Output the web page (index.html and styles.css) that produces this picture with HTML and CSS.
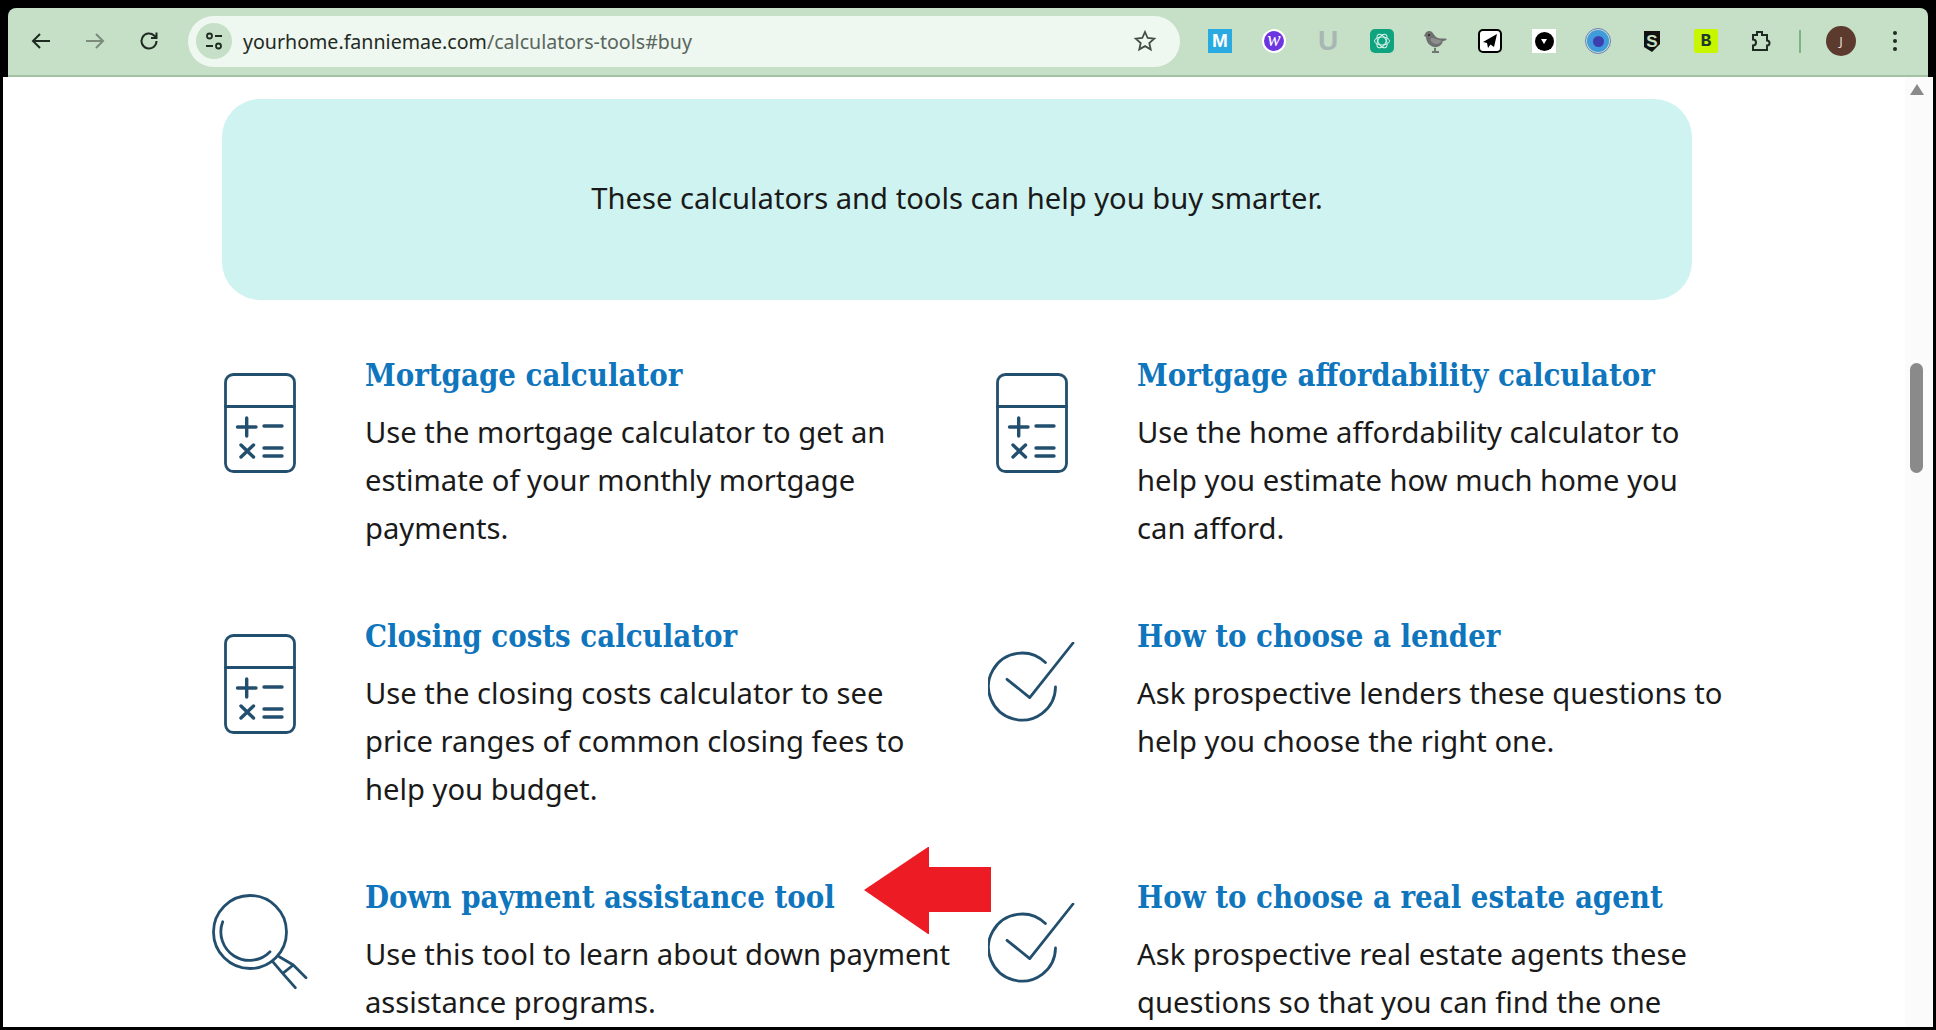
FILE: index.html
```html
<!DOCTYPE html>
<html>
<head>
  <title>Calculators and tools</title>
  <link rel="stylesheet" href="styles.css">
</head>
<body>
<div class="frame">

  <!-- browser toolbar -->
  <div class="toolbar">
    <div class="nav-btn">
      <svg width="24" height="24" viewBox="0 0 24 24" class="stroke-dark"><path d="M21 12H4M11 5l-7 7 7 7"/></svg>
    </div>
    <div class="nav-btn">
      <svg width="24" height="24" viewBox="0 0 24 24" class="stroke-grey"><path d="M3 12h17M13 5l7 7-7 7"/></svg>
    </div>
    <div class="nav-btn">
      <svg width="24" height="24" viewBox="0 0 24 24" class="stroke-dark"><path d="M19.500 12a7.500 7.500 0 1 1-2.400-5.500L19.500 9M19.500 3.500V9H14"/></svg>
    </div>

    <div class="address">
      <div class="site-icon">
        <svg width="22" height="22" viewBox="0 0 22 22" class="stroke-dark thin">
          <circle cx="6.500" cy="6" r="2.500"/><path d="M12 6h7M3 16h7"/><circle cx="15.500" cy="16" r="2.500"/>
        </svg>
      </div>
      <div class="url">yourhome.fanniemae.com<span class="url-path">/calculators-tools#buy</span></div>
      <svg class="star" width="24" height="24" viewBox="0 0 24 24"><path d="M12 3l2.700 6 6.500.7-4.900 4.300 1.400 6.400-5.700-3.300-5.700 3.300 1.400-6.400-4.900-4.300 6.500-.7z"/></svg>
    </div>

    <div class="extensions">
      <div class="ext"><div class="ext-m">M</div></div>
      <div class="ext"><div class="ext-w">w</div></div>
      <div class="ext"><div class="ext-u">U</div></div>
      <div class="ext">
        <div class="ext-gpt">
          <svg width="18" height="18" viewBox="0 0 18 18">
            <ellipse cx="9" cy="9" rx="7.500" ry="4"/>
            <ellipse cx="9" cy="9" rx="7.500" ry="4" transform="rotate(60 9 9)"/>
            <ellipse cx="9" cy="9" rx="7.500" ry="4" transform="rotate(120 9 9)"/>
          </svg>
        </div>
      </div>
      <div class="ext">
        <svg width="26" height="24" viewBox="0 0 26 24">
          <path fill="#6f6f6f" d="M2 5c1-3 5-4 7-2 2 2 3 5 6 6 3 1 6 0 9 1-1 1-2 2-4 2-1 4-5 7-9 6-5-1-8-6-8-10L1 7z"/>
          <path fill="#8e8e8e" d="M8 9c4 0 8 2 11 3-2 3-7 4-9 2-2-1-3-3-2-5z"/>
          <circle cx="6" cy="6" r="1" fill="#222"/>
          <path fill="none" stroke="#555" stroke-width="1.500" d="M12 19v3M9 23h7"/>
        </svg>
      </div>
      <div class="ext">
        <div class="ext-plane">
          <svg width="18" height="18" viewBox="0 0 18 18"><path d="M16 2L2 10l4 1 1 5 2.500-3.500L13 15z"/></svg>
        </div>
      </div>
      <div class="ext">
        <div class="ext-dot">
          <div class="ext-dot-inner">
            <svg width="6" height="6" viewBox="0 0 6 6"><path d="M0 1H6L3 6z"/></svg>
          </div>
        </div>
      </div>
      <div class="ext"><div class="ext-ring"><div class="ext-ring-inner"></div></div></div>
      <div class="ext">
        <div class="ext-shield">
          <svg width="16" height="21" viewBox="0 0 16 21"><path fill="#111" d="M0 0h16v13l-8 8-8-5z"/></svg>
          <span class="ext-shield-letter">S</span>
        </div>
      </div>
      <div class="ext"><div class="ext-b">B</div></div>
      <div class="ext">
        <svg width="24" height="24" viewBox="0 0 24 24" class="stroke-dark"><path d="M9 6V3h5v3h5v5.500a2.500 2.500 0 0 1 0 5V21H5v-4.500a3 3 0 0 0 0-6V6z"/></svg>
      </div>
    </div>

    <div class="toolbar-sep"></div>
    <div class="avatar">J</div>
    <div class="menu-dots"><span></span><span></span><span></span></div>
  </div>

  <div class="viewport">
    <div class="page">
      <div class="banner">These calculators and tools can help you buy smarter.</div>

      <div class="tools">
        <div class="tool">
          <div class="tool-icon icon-calc">
            <svg width="72" height="100" viewBox="0 0 72 100"><use href="#calc"/></svg>
          </div>
          <div>
            <h3>Mortgage calculator</h3>
            <p>Use the mortgage calculator to get an<br>estimate of your monthly mortgage<br>payments.</p>
          </div>
        </div>
        <div class="tool">
          <div class="tool-icon icon-calc">
            <svg width="72" height="100" viewBox="0 0 72 100"><use href="#calc"/></svg>
          </div>
          <div>
            <h3>Mortgage affordability calculator</h3>
            <p>Use the home affordability calculator to<br>help you estimate how much home you<br>can afford.</p>
          </div>
        </div>
        <div class="tool">
          <div class="tool-icon icon-calc">
            <svg width="72" height="100" viewBox="0 0 72 100"><use href="#calc"/></svg>
          </div>
          <div>
            <h3>Closing costs calculator</h3>
            <p>Use the closing costs calculator to see<br>price ranges of common closing fees to<br>help you budget.</p>
          </div>
        </div>
        <div class="tool">
          <div class="tool-icon icon-check">
            <svg width="88" height="80" viewBox="0 0 88 80"><use href="#check"/></svg>
          </div>
          <div>
            <h3>How to choose a lender</h3>
            <p>Ask prospective lenders these questions to<br>help you choose the right one.</p>
          </div>
        </div>
        <div class="tool">
          <div class="tool-icon icon-search">
            <svg width="100" height="98" viewBox="0 0 100 98"><use href="#search"/></svg>
          </div>
          <div>
            <h3>Down payment assistance tool</h3>
            <p>Use this tool to learn about down payment<br>assistance programs.</p>
          </div>
        </div>
        <div class="tool">
          <div class="tool-icon icon-check">
            <svg width="88" height="80" viewBox="0 0 88 80"><use href="#check"/></svg>
          </div>
          <div>
            <h3>How to choose a real estate agent</h3>
            <p>Ask prospective real estate agents these<br>questions so that you can find the one</p>
          </div>
        </div>
      </div>
    </div>

    <div class="scrollbar">
      <div class="scroll-up"></div>
      <div class="scroll-thumb"></div>
    </div>

    <!-- red annotation arrow -->
    <svg class="red-arrow" width="130" height="90" viewBox="0 0 130 90">
      <path d="M1 44L65 1H66V21H128V66H66V88H65z"/>
    </svg>
  </div>
</div>

<!-- shared icons -->
<svg class="icon-defs" width="0" height="0">
  <defs>
    <g id="calc" class="line-icon">
      <rect x="1.500" y="1.500" width="69" height="97" rx="8"/>
      <path d="M1.500 33.500H70.500"/>
      <path class="bold" d="M13.500 54H32M22.700 45V63M40 53H58M17 72L29.500 84M29.500 72L17 84M40 75H58M40 83H58"/>
    </g>
    <g id="check" class="line-icon">
      <path d="M57.400 20.600A33.500 33.500 0 1 0 67.500 45M19 37.300L41.700 55.600L85 1"/>
    </g>
    <g id="search" class="line-icon">
      <circle cx="40" cy="39" r="36.500"/>
      <path d="M12.700 28.700A28.600 28.600 0 0 0 60 58.700M69.300 63.700L83.300 72L96 84.700M62.700 68.700L72.700 80.300L85.300 94.700M72.700 80.300L83.300 72"/>
    </g>
  </defs>
</svg>
</body>
</html>
```

FILE: styles.css
```css
html, body {
  margin: 0;
  height: 100%;
  overflow: hidden;
}

body {
  background-color: #000;
  font-family: "Noto Sans", sans-serif;
}

.frame {
  height: 1030px;
  padding: 8px 3px 3px 3px;
  box-sizing: border-box;
  display: flex;
  flex-direction: column;
}

/* toolbar */
.toolbar {
  height: 69px;
  margin: 0 5px;
  box-sizing: border-box;
  background-color: #c5e0c6;
  border-bottom: 2px solid #a3c2a4;
  border-radius: 8px 8px 0 0;
  display: flex;
  align-items: center;
  padding: 0 0 1px 6px;
  flex: none;
}

.nav-btn {
  width: 54px;
  display: flex;
  justify-content: center;
  flex: none;
}

.toolbar svg {
  display: block;
}

.stroke-dark path, .stroke-dark circle,
.stroke-grey path {
  fill: none;
  stroke: #1f2a22;
  stroke-width: 2;
}

.stroke-dark.thin path, .stroke-dark.thin circle {
  stroke-width: 1.800;
}

.stroke-grey path {
  stroke: #7b8c7d;
}

.address {
  width: 992px;
  height: 51px;
  margin-left: 12px;
  background-color: #eff7f1;
  border-radius: 26px;
  display: flex;
  align-items: center;
  flex: none;
}

.site-icon {
  width: 36px;
  height: 36px;
  margin-left: 8px;
  border-radius: 50%;
  background-color: #c5e0c6;
  display: flex;
  align-items: center;
  justify-content: center;
  flex: none;
}

.url {
  margin-left: 11px;
  font-size: 19.600px;
  color: #1f2a22;
  flex: 1;
}

.url-path {
  color: #59665c;
}

.star {
  margin-right: 23px;
}

.star path {
  fill: none;
  stroke: #444d46;
  stroke-width: 1.800;
}

.extensions {
  display: flex;
  margin-left: 13px;
  flex: none;
}

.ext {
  width: 54px;
  height: 36px;
  display: flex;
  align-items: center;
  justify-content: center;
}

.ext-m {
  width: 24px;
  height: 24px;
  background-color: #29abe2;
  color: #fff;
  font: bold 19px/24px "Liberation Sans", sans-serif;
  text-align: center;
}

.ext-w {
  width: 24px;
  height: 24px;
  box-sizing: border-box;
  border: 2px solid #fff;
  border-radius: 50%;
  background-color: #6d35e0;
  color: #fff;
  font: italic 20px/17px "Liberation Serif", serif;
  text-align: center;
}

.ext-u {
  color: #a9b7b4;
  font: bold 28px/28px "Liberation Sans", sans-serif;
}

.ext-gpt {
  width: 24px;
  height: 24px;
  border-radius: 5px;
  background-color: #10a37f;
  display: flex;
  align-items: center;
  justify-content: center;
}

.ext-gpt ellipse {
  fill: none;
  stroke: #d6f2ea;
  stroke-width: 1;
}

.ext-plane {
  width: 24px;
  height: 24px;
  box-sizing: border-box;
  border: 2px solid #000;
  border-radius: 5px;
  background-color: #fff;
  display: flex;
  align-items: center;
  justify-content: center;
}

.ext-plane path {
  fill: #000;
}

.ext-dot {
  width: 24px;
  height: 24px;
  background-color: #fff;
  display: flex;
  align-items: center;
  justify-content: center;
}

.ext-dot-inner {
  width: 19px;
  height: 19px;
  border-radius: 50%;
  background-color: #000;
  display: flex;
  align-items: center;
  justify-content: center;
}

.ext-dot-inner path {
  fill: #fff;
}

.ext-ring {
  width: 22px;
  height: 22px;
  box-sizing: border-box;
  outline: 1px solid #6f7fc0;
  outline-offset: 1px;
  border-radius: 50%;
  background-color: #3f9bdc;
  display: flex;
  align-items: center;
  justify-content: center;
}

.ext-ring-inner {
  width: 11px;
  height: 11px;
  border-radius: 50%;
  background-color: #3d3fb0;
}

.ext-shield {
  position: relative;
  width: 16px;
  height: 21px;
}

.ext-shield-letter {
  position: absolute;
  left: 0;
  right: 0;
  top: 0;
  text-align: center;
  color: #c5e0c6;
  font: bold 17px/21px "Liberation Sans", sans-serif;
}

.ext-b {
  width: 24px;
  height: 24px;
  border-radius: 2px;
  background-color: #c8f500;
  color: #1e3a2a;
  font: bold 18px/24px "Liberation Mono", monospace;
  text-align: center;
}

.toolbar-sep {
  width: 2px;
  height: 23px;
  margin-left: 12px;
  background-color: #7fb585;
  flex: none;
}

.avatar {
  width: 30px;
  height: 30px;
  margin-left: 25px;
  border-radius: 50%;
  background-color: #5c3a2e;
  color: #e8dcd6;
  font-size: 13px;
  line-height: 30px;
  text-align: center;
  flex: none;
}

.menu-dots {
  margin-left: 37px;
  display: flex;
  flex-direction: column;
  gap: 4px;
}

.menu-dots span {
  width: 4px;
  height: 4px;
  border-radius: 50%;
  background-color: #1f2a22;
}

/* page */
.viewport {
  position: relative;
  flex: 1;
  min-height: 0;
  background-color: #fff;
  display: flex;
  overflow: hidden;
}

.page {
  flex: 1;
  padding: 22px 0 0 219px;
}

.banner {
  width: 1470px;
  height: 201px;
  padding-bottom: 4px;
  box-sizing: border-box;
  background-color: #cff3f1;
  border-radius: 38px;
  display: flex;
  align-items: center;
  justify-content: center;
  font-size: 29.200px;
  color: #1a1a1a;
}

.tools {
  margin-top: 55px;
  display: grid;
  grid-template-columns: 772px 772px;
  grid-auto-rows: 261px;
}

.tool {
  display: flex;
  align-items: flex-start;
}

.tool-icon {
  flex: none;
}

.tool-icon svg {
  display: block;
}

.icon-calc {
  padding: 18px 0 0 2px;
  width: 141px;
}

.icon-check {
  margin-left: -6px;
  padding-top: 26px;
  width: 149px;
}

.icon-search {
  margin-left: -12px;
  padding-top: 16px;
  width: 155px;
}

.icon-defs {
  position: absolute;
}

.line-icon rect, .line-icon circle, .line-icon path {
  fill: none;
  stroke: #234f6e;
  stroke-width: 2.800;
  stroke-linecap: round;
  stroke-linejoin: round;
}

.line-icon path.bold {
  stroke-width: 3.400;
}

h3 {
  margin: 0;
  font-family: "DejaVu Serif", serif;
  font-stretch: condensed;
  font-weight: bold;
  font-size: 30.800px;
  line-height: 40px;
  color: #0f75bc;
}

.tool p {
  margin: 13px 0 0 0;
  font-size: 29.200px;
  line-height: 48px;
  color: #1a1a1a;
  white-space: nowrap;
}

.scrollbar {
  width: 28px;
  padding-right: 5px;
  box-sizing: border-box;
  background-color: #fbfbfb;
  flex: none;
  display: flex;
  flex-direction: column;
  align-items: center;
}

.scroll-up {
  margin-top: 7px;
  width: 0;
  height: 0;
  border-left: 7px solid transparent;
  border-right: 7px solid transparent;
  border-bottom: 11px solid #8a8a8a;
}

.scroll-thumb {
  margin-top: 268px;
  width: 13px;
  height: 110px;
  border-radius: 7px;
  background-color: #8a8a8a;
}

.red-arrow {
  position: absolute;
  left: 860px;
  top: 769px;
}

.red-arrow path {
  fill: #ed1c24;
}
```
